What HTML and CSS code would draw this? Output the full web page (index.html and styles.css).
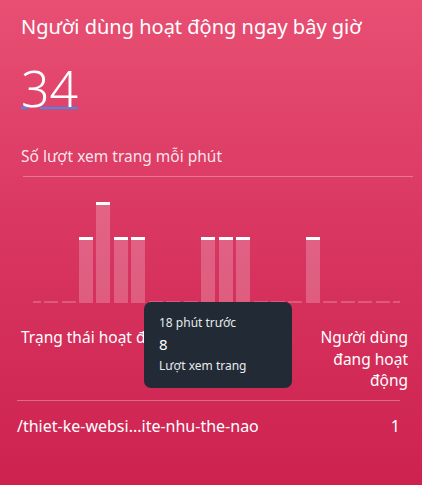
FILE: index.html
```html
<!DOCTYPE html>
<html lang="vi">
<head>
<meta charset="utf-8">
<title>Người dùng hoạt động</title>
<link rel="stylesheet" href="styles.css">
</head>
<body>
<div class="card">
  <h1 class="title">Người dùng hoạt động ngay bây giờ</h1>
  <div class="count">34</div>
  <div class="sub">Số lượt xem trang mỗi phút</div>
  <div class="chart">
    <div class="bars">
      <div class="slot"><span class="dash"></span></div>
      <div class="slot"><span class="dash"></span></div>
      <div class="slot"><span class="dash"></span></div>
      <div class="slot"><span class="bar" style="height:66px"></span></div>
      <div class="slot"><span class="bar" style="height:101px"></span></div>
      <div class="slot"><span class="bar" style="height:66px"></span></div>
      <div class="slot"><span class="bar" style="height:66px"></span></div>
      <div class="slot"><span class="dash"></span></div>
      <div class="slot"><span class="dash"></span></div>
      <div class="slot"><span class="dash"></span></div>
      <div class="slot"><span class="bar" style="height:66px"></span></div>
      <div class="slot"><span class="bar" style="height:66px"></span></div>
      <div class="slot"><span class="bar" style="height:66px"></span></div>
      <div class="slot"><span class="dash"></span></div>
      <div class="slot"><span class="dash"></span></div>
      <div class="slot"><span class="dash"></span></div>
      <div class="slot"><span class="bar" style="height:66px"></span></div>
      <div class="slot"><span class="dash"></span></div>
      <div class="slot"><span class="dash"></span></div>
      <div class="slot"><span class="dash"></span></div>
      <div class="slot"><span class="dash"></span></div>
      <div class="slot"><span class="dash"></span></div>
    </div>
  </div>
  <div class="labels">
    <span class="label-left">Trạng thái hoạt động</span>
    <span class="label-right">Người dùng đang hoạt động</span>
  </div>
  <div class="row">
    <span class="path">/thiet-ke-websi...ite-nhu-the-nao</span>
    <span class="num">1</span>
  </div>
  <div class="tooltip">
    <div class="tt-time">18 phút trước</div>
    <div class="tt-value">8</div>
    <div class="tt-label">Lượt xem trang</div>
  </div>
</div>
</body>
</html>
```
FILE: styles.css
```css
html, body {
  margin: 0;
  padding: 0;
}
body {
  width: 422px;
  height: 485px;
  overflow: hidden;
  background: linear-gradient(180deg, #e84f73 0%, #d83560 50%, #cd2250 100%);
  font-family: "Noto Sans", "Open Sans", sans-serif;
  color: #fff;
}
.card {
  position: relative;
  height: 485px;
  padding: 13px 9px 0 21px;
  box-sizing: border-box;
}
.title {
  margin: 0;
  font-size: 20px;
  line-height: 28px;
  font-weight: 400;
}
.count {
  margin-top: 22px;
  font-size: 50px;
  line-height: 50px;
  font-weight: 300;
  display: inline-block;
  text-decoration: underline;
  text-decoration-color: #3b8ff0;
  text-decoration-thickness: 2px;
  text-underline-offset: 0px;
}
.sub {
  margin-top: 33px;
  font-size: 15.5px;
  line-height: 20px;
  color: rgba(255, 255, 255, 0.88);
}
.chart {
  margin-top: 10px;
  margin-left: 2px;
  border-top: 1px solid rgba(255, 255, 255, 0.3);
  height: 126px;
  position: relative;
}
.bars {
  position: absolute;
  left: 10px;
  bottom: 0;
  width: 367px;
  height: 126px;
  overflow: hidden;
  display: grid;
  grid-template-columns: repeat(22, 17.46px);
  align-items: end;
}
.slot {
  display: flex;
  justify-content: center;
  align-items: flex-end;
  height: 126px;
  margin-left: -8.1px;
  margin-right: 8.1px;
}
.dash {
  display: block;
  width: 14px;
  height: 2px;
  background: rgba(255, 255, 255, 0.2);
}
.bar {
  display: block;
  width: 14px;
  box-sizing: border-box;
  background: rgba(255, 255, 255, 0.22);
  border-top: 3px solid #fff;
}
.labels {
  display: flex;
  justify-content: space-between;
  align-items: flex-start;
  margin-top: 24px;
  font-size: 15.5px;
  line-height: 21.7px;
}
.label-left {
  white-space: nowrap;
}
.label-right {
  width: 94px;
  text-align: right;
  margin-right: 5px;
}
.row {
  margin-left: -4px;
  margin-right: 13px;
  padding-top: 14px;
  border-top: 1px solid rgba(255, 255, 255, 0.3);
  margin-top: 8px;
  display: flex;
  justify-content: space-between;
  font-size: 16px;
  line-height: 22px;
}
.tooltip {
  position: absolute;
  left: 144px;
  top: 302px;
  width: 148px;
  height: 86px;
  box-sizing: border-box;
  padding: 13px 15px 0;
  background: #212a35;
  border-radius: 7px;
  color: #e8eaec;
}
.tt-time {
  font-size: 12px;
  line-height: 16px;
}
.tt-value {
  margin-top: 4px;
  font-size: 15px;
  line-height: 18px;
  color: #fff;
}
.tt-label {
  margin-top: 5px;
  font-size: 12px;
  line-height: 16px;
}
```
